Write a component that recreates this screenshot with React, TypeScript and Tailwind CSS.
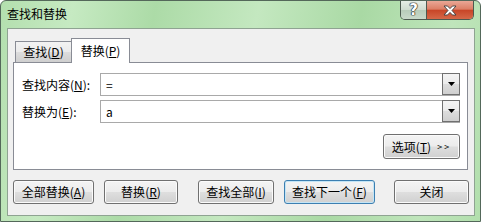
import React from 'react';

const FONT = "font-['Microsoft_YaHei','Noto_Sans_CJK_SC',sans-serif]";

const BTN =
    'h-[24px] flex items-center justify-center rounded-[3px] border text-[12px] leading-none text-black bg-[linear-gradient(#f4f4f4_0%,#ececec_48%,#dedede_52%,#d0d0d0_100%)]';

function Btn({ w, label, keyChar, focus }: { w: string; label: string; keyChar?: string; focus?: boolean }) {
    return (
        <div
            className={`${BTN} ${w} ${focus
                ? 'border-[#3c7fb1] shadow-[inset_0_0_0_1px_#c4e5f6]'
                : 'border-[#707070] shadow-[inset_0_0_0_1px_#fbfbfb]'
                }`}
        >
            <span>
                {label}
                {keyChar && (
                    <>
                        (<u>{keyChar}</u>)
                    </>
                )}
            </span>
        </div>
    );
}

function Combo({ value }: { value: string }) {
    return (
        <div className="flex h-[23px] w-[360px] border border-[#a9a9a9] bg-white">
            <div className="flex-1 pl-[5px] flex items-center text-[12px] leading-none">{value}</div>
            <div className="-mt-[1px] -mr-[1px] h-[22px] w-[18px] border border-[#707070] bg-[linear-gradient(#f4f4f4_0%,#ebebeb_50%,#dddddd_50%,#cfcfcf_100%)] flex items-center justify-center">
                <svg width="7" height="4" viewBox="0 0 7 4">
                    <path d="M0 0 H7 L3.5 4 Z" fill="#000" />
                </svg>
            </div>
        </div>
    );
}

export default function App() {
    return (
        <div
            className={`${FONT} w-[481px] h-[222px] flex flex-col border border-[#54685a] rounded-t-[6px] overflow-hidden bg-[linear-gradient(100deg,#b3dfae_0%,#c6eac2_14%,#acdba7_30%,#c4e8c0_50%,#a9d9a4_70%,#bfe5bb_88%,#b2dfad_100%)]`}
        >
            {/* title bar */}
            <div className="h-[27px] flex justify-between shrink-0">
                <div className="pl-[6px] pt-[6px] text-[12px] leading-[14px] text-black">查找和替换</div>
                <div className="mr-[6px] flex h-[19px] border border-t-0 border-[#4d5a50] rounded-b-[5px] overflow-hidden">
                    <div className="w-[26px] h-full flex items-center justify-center bg-[linear-gradient(#e6eee6_0%,#cfdcd0_50%,#b8ccba_52%,#c9d9ca_100%)] border-r border-[#4d5a50]">
                        <span className="text-white font-bold text-[15px] leading-none font-['DejaVu_Sans',sans-serif] [text-shadow:0_0_1px_#222,0_0_1px_#222,0_0_1px_#222,0_0_1px_#222]">
                            ?
                        </span>
                    </div>
                    <div className="w-[46px] h-full flex items-center justify-center bg-[linear-gradient(#eaa796_0%,#dc7f66_45%,#c84628_52%,#d56848_100%)]">
                        <svg width="14" height="11" viewBox="0 0 14 11">
                            <path
                                d="M1 1 H4.5 L7 3.6 L9.5 1 H13 L9 5.5 L13 10 H9.5 L7 7.4 L4.5 10 H1 L5 5.5 Z"
                                fill="#fff"
                                stroke="#3d3d3d"
                                strokeWidth="0.9"
                                strokeLinejoin="round"
                            />
                        </svg>
                    </div>
                </div>
            </div>

            {/* client area */}
            <div className="ml-[6px] w-[468px] h-[188px] border border-[#8fa392] bg-[#f0f0f0] flex flex-col pt-[9px] pl-[5px]">
                {/* tabs */}
                <div className="flex items-end h-[24px] pl-[2px] relative z-10">
                    <div className="w-[56px] h-[21px] border border-r-0 border-b-0 border-[#898c95] bg-[linear-gradient(#f2f2f2_0%,#ebebeb_50%,#dddddd_50%,#cfcfcf_100%)] flex items-center justify-center text-[12px] leading-none">
                        <span>
                            查找(<u>D</u>)
                        </span>
                    </div>
                    <div className="w-[59px] h-[25px] -mb-[1px] border border-b-0 border-[#898c95] bg-white flex items-center justify-center text-[12px] leading-none pb-[1px]">
                        <span>
                            替换(<u>P</u>)
                        </span>
                    </div>
                </div>

                {/* panel */}
                <div className="w-[455px] h-[108px] border border-[#898c95] bg-white flex flex-col pl-[8px] pr-[6px] pt-[10px] text-[12px]">
                    <div className="flex items-center">
                        <div className="w-[78px] leading-none">
                            查找内容(<u>N</u>):
                        </div>
                        <Combo value="=" />
                    </div>
                    <div className="flex items-center mt-[4px]">
                        <div className="w-[78px] leading-none">
                            替换为(<u>E</u>):
                        </div>
                        <Combo value="a" />
                    </div>
                    <div className="self-end mt-[11px] mr-[1px] w-[77px] h-[25px] flex items-center justify-center rounded-[3px] border border-[#707070] shadow-[inset_0_0_0_1px_#fbfbfb] bg-[linear-gradient(#f4f4f4_0%,#ececec_48%,#dedede_52%,#d0d0d0_100%)] text-[12px] leading-none">
                        <span>
                            选项(<u>T</u>)
                        </span>
                        <span className="ml-[6px] text-[9px] tracking-[2px]">&gt;&gt;</span>
                    </div>
                </div>

                {/* bottom buttons */}
                <div className="flex mt-[10px]">
                    <Btn w="w-[81px]" label="全部替换" keyChar="A" />
                    <div className="ml-[10px]">
                        <Btn w="w-[74px]" label="替换" keyChar="R" />
                    </div>
                    <div className="ml-[20px]">
                        <Btn w="w-[76px]" label="查找全部" keyChar="I" />
                    </div>
                    <div className="ml-[10px]">
                        <Btn w="w-[91px]" label="查找下一个" keyChar="F" focus />
                    </div>
                    <div className="ml-[19px]">
                        <Btn w="w-[75px]" label="关闭" />
                    </div>
                </div>
            </div>
        </div>
    );
}
